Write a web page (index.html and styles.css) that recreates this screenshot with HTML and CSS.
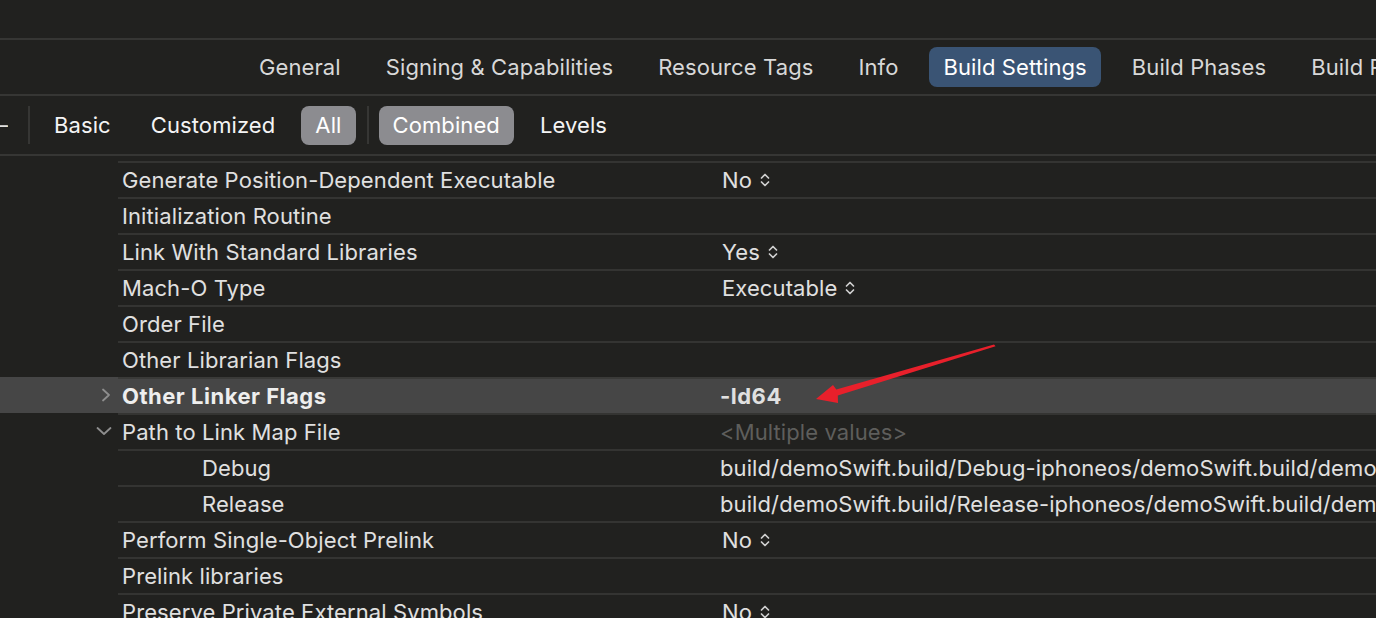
FILE: index.html
```html
<!DOCTYPE html>
<html>
<head>
<meta charset="utf-8">
<link rel="stylesheet" href="styles.css">
</head>
<body>
<div class="window">
  <div class="topbar"></div>
  <div class="tabbar">
    <span class="tab">General</span>
    <span class="tab">Signing &amp; Capabilities</span>
    <span class="tab">Resource Tags</span>
    <span class="tab">Info</span>
    <span class="tab active">Build Settings</span>
    <span class="tab">Build Phases</span>
    <span class="tab">Build Rules</span>
  </div>
  <div class="filterbar">
    <span class="minus">–</span>
    <span class="vsep"></span>
    <span class="filter">Basic</span>
    <span class="filter">Customized</span>
    <span class="filter pill before-sep">All</span>
    <span class="vsep tight"></span>
    <span class="filter pill">Combined</span>
    <span class="filter">Levels</span>
  </div>
  <div class="table">
    <div class="row"><div class="gutter"></div><div class="cells"><div class="name">Generate Position-Dependent Executable</div><div class="value">No<svg class="updown" viewBox="0 0 10 16"><path d="M1.5 6 L5 2.5 L8.5 6 M1.5 10 L5 13.5 L8.5 10"/></svg></div></div></div>
    <div class="row"><div class="gutter"></div><div class="cells"><div class="name">Initialization Routine</div><div class="value"></div></div></div>
    <div class="row"><div class="gutter"></div><div class="cells"><div class="name">Link With Standard Libraries</div><div class="value">Yes<svg class="updown" viewBox="0 0 10 16"><path d="M1.5 6 L5 2.5 L8.5 6 M1.5 10 L5 13.5 L8.5 10"/></svg></div></div></div>
    <div class="row"><div class="gutter"></div><div class="cells"><div class="name">Mach-O Type</div><div class="value">Executable<svg class="updown" viewBox="0 0 10 16"><path d="M1.5 6 L5 2.5 L8.5 6 M1.5 10 L5 13.5 L8.5 10"/></svg></div></div></div>
    <div class="row"><div class="gutter"></div><div class="cells"><div class="name">Order File</div><div class="value"></div></div></div>
    <div class="row"><div class="gutter"></div><div class="cells"><div class="name">Other Librarian Flags</div><div class="value"></div></div></div>
    <div class="row selected"><div class="gutter"><svg class="disclosure" viewBox="0 0 12 14"><path d="M3 1.5 L9 7 L3 12.5"/></svg></div><div class="cells"><div class="name bold">Other Linker Flags</div><div class="value bold flag">-ld64</div></div></div>
    <div class="row"><div class="gutter"><svg class="disclosure down" viewBox="0 0 16 10"><path d="M1.5 2 L8 8 L14.5 2"/></svg></div><div class="cells"><div class="name">Path to Link Map File</div><div class="value placeholder">&lt;Multiple values&gt;</div></div></div>
    <div class="row"><div class="gutter"></div><div class="cells"><div class="name sub">Debug</div><div class="value path">build/demoSwift.build/Debug-iphoneos/demoSwift.build/demoSwift-LinkMap-normal-arm64.txt</div></div></div>
    <div class="row"><div class="gutter"></div><div class="cells"><div class="name sub">Release</div><div class="value path">build/demoSwift.build/Release-iphoneos/demoSwift.build/demoSwift-LinkMap-normal-arm64.txt</div></div></div>
    <div class="row"><div class="gutter"></div><div class="cells"><div class="name">Perform Single-Object Prelink</div><div class="value">No<svg class="updown" viewBox="0 0 10 16"><path d="M1.5 6 L5 2.5 L8.5 6 M1.5 10 L5 13.5 L8.5 10"/></svg></div></div></div>
    <div class="row"><div class="gutter"></div><div class="cells"><div class="name">Prelink libraries</div><div class="value"></div></div></div>
    <div class="row"><div class="gutter"></div><div class="cells"><div class="name">Preserve Private External Symbols</div><div class="value">No<svg class="updown" viewBox="0 0 10 16"><path d="M1.5 6 L5 2.5 L8.5 6 M1.5 10 L5 13.5 L8.5 10"/></svg></div></div></div>
  </div>
  <svg class="annotation" viewBox="0 0 1376 618" width="1376" height="618">
    <polygon points="816,399 833,385 836.3,389.4 994,344.6 995.6,346.2 837.8,395.4 838,403" fill="#e8202b"/>
  </svg>
</div>
</body>
</html>
```
FILE: styles.css
```css
html, body {
  margin: 0;
  padding: 0;
  background: #21211f;
  overflow: hidden;
}
.window {
  position: relative;
  width: 1376px;
  height: 618px;
  overflow: hidden;
  font-family: Inter, "Noto Sans", sans-serif;
  font-size: 22px;
  letter-spacing: 0.1px;
  color: #e0e0e0;
  background: #21211f;
}
.topbar {
  height: 38px;
  border-bottom: 2px solid #363634;
}
.tabbar {
  height: 54px;
  border-bottom: 2px solid #363634;
  display: flex;
  align-items: center;
  gap: 17px;
  padding-left: 245px;
  white-space: nowrap;
}
.tab {
  padding: 0 14px;
  height: 40px;
  line-height: 40px;
  border-radius: 8px;
  color: #d8d8d8;
  flex: none;
}
.tab.active {
  background: #3a5474;
  color: #ffffff;
}
.filterbar {
  height: 58px;
  border-bottom: 2px solid #363634;
  display: flex;
  align-items: center;
  white-space: nowrap;
}
.minus {
  color: #e0e0e0;
  margin-left: -3px;
  width: 11px;
  overflow: hidden;
}
.vsep {
  width: 2px;
  height: 38px;
  background: #363634;
  margin: 0 10px 0 20px;
}
.vsep.tight {
  margin: 0 10px 0 11px;
}
.filter {
  padding: 0 14px;
  height: 39px;
  line-height: 39px;
  border-radius: 8px;
  color: #f4f4f4;
  margin-right: 12px;
}
.filter.pill {
  background: #8c8c90;
  color: #ffffff;
}
.filter.before-sep {
  margin-right: 0;
}
.table {
  margin-top: 5px;
}
.row {
  display: flex;
  height: 36px;
}
.row.selected {
  background: #464646;
}
.gutter {
  width: 118px;
  flex: none;
  display: flex;
  align-items: center;
  justify-content: flex-end;
  padding-right: 6px;
  box-sizing: border-box;
}
.cells {
  flex: 1;
  display: flex;
  align-items: center;
  border-top: 2px solid #343432;
  box-sizing: border-box;
  min-width: 0;
  white-space: nowrap;
}
.row.selected .cells {
  border-top-color: #3a3a38;
}
.name {
  width: 600px;
  flex: none;
  padding-left: 4px;
  box-sizing: border-box;
}
.name.sub {
  padding-left: 84px;
}
.bold {
  font-weight: 700;
  letter-spacing: 0.5px;
  color: #eeeeee;
}
.value {
  flex: 1;
  display: flex;
  align-items: center;
  min-width: 0;
  overflow: hidden;
  color: #e0e0e0;
}
.value.flag {
  padding-left: 2px;
}
.value.placeholder {
  color: #5e5e5c;
  padding-left: 2px;
}
.value.path {
  padding-left: 2px;
}
.row .value:not(.placeholder):not(.path):not(.flag) {
  padding-left: 4px;
}
.updown {
  width: 10px;
  height: 16px;
  margin-left: 8px;
  fill: none;
  stroke: #cfcfcf;
  stroke-width: 1.7;
  stroke-linecap: round;
  stroke-linejoin: round;
}
.disclosure {
  width: 12px;
  height: 14px;
  fill: none;
  stroke: #8e8e8e;
  stroke-width: 1.8;
  stroke-linecap: round;
  stroke-linejoin: round;
}
.disclosure.down {
  width: 16px;
  height: 10px;
}
.annotation {
  position: absolute;
  left: 0;
  top: 0;
  pointer-events: none;
}
```
